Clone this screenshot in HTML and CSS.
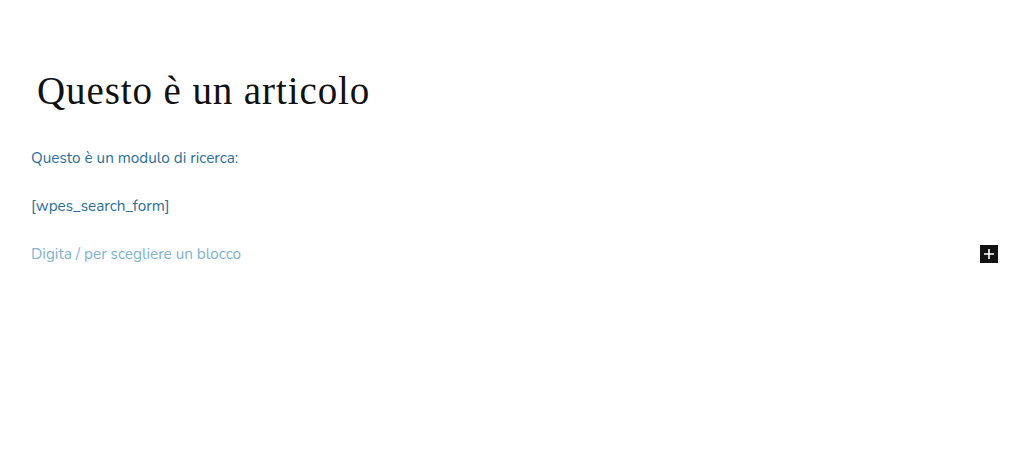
FILE: index.html
```html
<!DOCTYPE html>
<html lang="it">
<head>
<meta charset="utf-8">
<link rel="stylesheet" href="styles.css">
</head>
<body>
<div class="editor">
  <h1 class="title">Questo è un articolo</h1>
  <p class="para">Questo è un modulo di ricerca:</p>
  <p class="para">[wpes_search_form]</p>
  <div class="row">
    <p class="para placeholder">Digita / per scegliere un blocco</p>
    <button class="inserter" aria-label="Aggiungi blocco">
      <svg width="12" height="12" viewBox="0 0 12 12"><path d="M6 1v10M1 6h10" stroke="#fff" stroke-width="1.6"/></svg>
    </button>
  </div>
</div>
</body>
</html>
```
FILE: styles.css
```css
html, body { margin: 0; padding: 0; background: #fff; }
.editor { padding: 69px 26px 0 31px; }
.title {
  font-family: "Liberation Serif", "DejaVu Serif", serif;
  font-weight: 400;
  font-size: 39px;
  letter-spacing: 0.9px;
  line-height: 44px;
  margin: 0 0 33px 6px;
  color: #111;
}
.para {
  font-family: "Nunito", "Lato", "Open Sans", sans-serif;
  font-size: 15.3px;
  line-height: 24px;
  color: #2b6e98;
  margin: 0 0 24px 0;
}
.row { display: flex; align-items: center; justify-content: space-between; }
.row .para { margin: 0; }
.placeholder { color: #7fb2cf; }
.inserter {
  width: 18px; height: 18px; padding: 0; border: 0;
  background: #111; display: flex; align-items: center; justify-content: center;
}
```
